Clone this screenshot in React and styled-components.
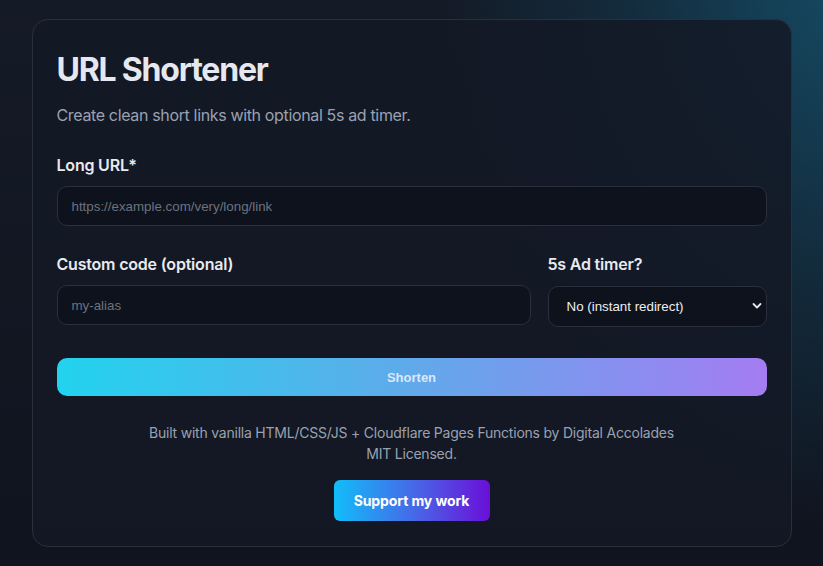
import React from "react";
import styled, { createGlobalStyle } from "styled-components";

const GlobalStyle = createGlobalStyle`
  html, body {
    margin: 0;
    padding: 0;
  }
  body {
    font-family: Inter, "Noto Sans", "Liberation Sans", sans-serif;
    background-color: #10141f;
    color: #e5e7eb;
  }
  * {
    box-sizing: border-box;
  }
`;

const Page = styled.div`
  min-height: 100vh;
  padding: 19px 0 20px;
  background:
    radial-gradient(ellipse 480px 640px at 104% -6%, rgba(21, 76, 102, 1), rgba(19, 56, 76, 0.6) 48%, transparent 88%),
    linear-gradient(180deg, #141a26 0%, #10141f 100%);
`;

const Card = styled.main`
  width: 760px;
  margin: 0 auto;
  padding: 31px 24px 25px;
  border: 1px solid #2a2f3d;
  border-radius: 16px;
  background-color: rgba(20, 25, 37, 0.86);
`;

const Title = styled.h1`
  margin: 0;
  font-size: 32px;
  line-height: 38px;
  font-weight: 700;
  letter-spacing: -1.2px;
  color: #e6e8f0;
`;

const Subtitle = styled.p`
  margin: 14px 0 0;
  font-size: 16px;
  line-height: 24px;
  letter-spacing: -0.35px;
  color: #9aa2b1;
`;

const Field = styled.div`
  display: flex;
  flex-direction: column;
  gap: 9px;
  margin-top: ${(p) => p.$top || 0}px;
`;

const Row = styled.div`
  display: grid;
  grid-template-columns: 1fr 219px;
  gap: 17px;
  margin-top: 26px;
`;

const Label = styled.label`
  font-size: 16px;
  line-height: 24px;
  font-weight: 600;
  letter-spacing: -0.2px;
  color: #e8eaf0;
`;

const Input = styled.input`
  height: 40px;
  width: 100%;
  padding: 0 14px;
  border: 1px solid #2a2f3d;
  border-radius: 10px;
  background-color: #0e121c;
  color: #e5e7eb;
  font-family: "Liberation Sans", Arial, sans-serif;
  font-size: 13.33px;
  outline: none;
  &::placeholder {
    color: #6b7280;
  }
`;

const SelectWrap = styled.div`
  position: relative;
  margin-top: 1px;
`;

const Select = styled.select`
  appearance: none;
  width: 100%;
  height: 41px;
  padding: 0 30px 0 18px;
  border: 1px solid #2a2f3d;
  border-radius: 10px;
  background-color: #0e121c;
  color: #eceef3;
  font-family: "Liberation Sans", Arial, sans-serif;
  font-size: 13.33px;
  outline: none;
`;

const Chevron = styled.svg`
  position: absolute;
  right: 5px;
  top: 16px;
  width: 10px;
  height: 8px;
  pointer-events: none;
`;

const ShortenButton = styled.button`
  display: block;
  width: 100%;
  height: 38px;
  margin-top: 31px;
  border: none;
  border-radius: 10px;
  background: linear-gradient(90deg, #22d3ee 0%, #5aaeea 45%, #a47cf2 100%);
  color: rgba(236, 240, 252, 0.9);
  font-family: "Liberation Sans", Arial, sans-serif;
  font-size: 13px;
  font-weight: 700;
  cursor: pointer;
`;

const Footer = styled.footer`
  margin-top: 26px;
  display: flex;
  flex-direction: column;
  align-items: center;
  text-align: center;
  font-size: 14px;
  line-height: 21px;
  letter-spacing: -0.22px;
  color: #9aa2b1;
`;

const SupportButton = styled.a`
  display: inline-flex;
  align-items: center;
  justify-content: center;
  width: 156px;
  height: 41px;
  margin-top: 16px;
  border-radius: 6px;
  background: linear-gradient(90deg, #12bdf9 0%, #4a62e6 55%, #6a0fd8 100%);
  color: #ffffff;
  font-size: 14px;
  font-weight: 700;
  letter-spacing: -0.1px;
  text-decoration: none;
`;

const App = () => {
  return (
    <Page>
      <GlobalStyle />
      <Card>
        <Title>URL Shortener</Title>
        <Subtitle>Create clean short links with optional 5s ad timer.</Subtitle>

        <Field $top={26}>
          <Label htmlFor="long">Long URL*</Label>
          <Input id="long" placeholder="https://example.com/very/long/link" />
        </Field>

        <Row>
          <Field>
            <Label htmlFor="code">Custom code (optional)</Label>
            <Input id="code" placeholder="my-alias" />
          </Field>
          <Field>
            <Label htmlFor="timer">5s Ad timer?</Label>
            <SelectWrap>
              <Select id="timer" defaultValue="no">
                <option value="no">No (instant redirect)</option>
                <option value="yes">Yes (5s ad timer)</option>
              </Select>
              <Chevron viewBox="0 0 10 8">
                <path d="M1.5 2 L5 5.5 L8.5 2" fill="none" stroke="#e5e7eb" strokeWidth="1.8" strokeLinecap="round" strokeLinejoin="round" />
              </Chevron>
            </SelectWrap>
          </Field>
        </Row>

        <ShortenButton>Shorten</ShortenButton>

        <Footer>
          <div>Built with vanilla HTML/CSS/JS + Cloudflare Pages Functions by Digital Accolades</div>
          <div>MIT Licensed.</div>
          <SupportButton href="#">Support my work</SupportButton>
        </Footer>
      </Card>
    </Page>
  );
};

export default App;
